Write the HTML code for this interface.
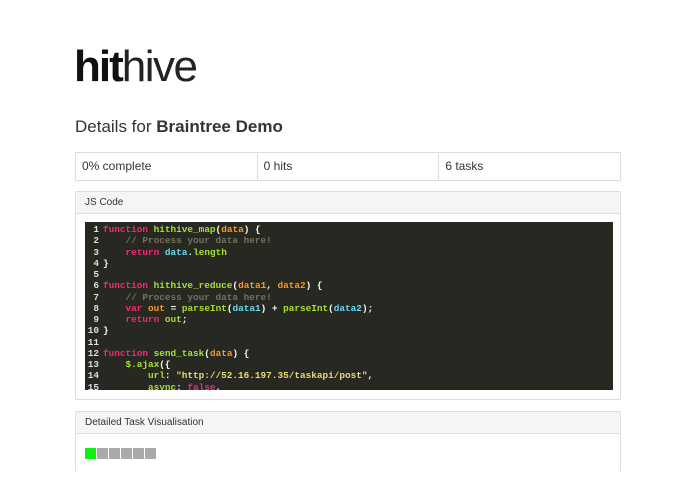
<!DOCTYPE html>
<html><head><style>
body{margin:0;background:#fff;font-family:"Liberation Sans",sans-serif;color:#333;width:695px;height:494px;overflow:hidden;position:relative}
.logo{position:absolute;left:74px;top:39px;font-size:44px;letter-spacing:-1.5px;color:#111;line-height:56px}
.logo b{font-weight:bold;letter-spacing:-2px}.logo span{font-weight:normal;color:#222}
h1{position:absolute;left:75px;top:117px;margin:0;font-size:17px;font-weight:normal;color:#333}
h1 b{font-weight:bold}
.stats{position:absolute;left:75px;top:152px;width:544px;height:27px;border:1px solid #ddd;display:flex;font-size:12px}
.stats div{flex:1;padding-left:6px;line-height:27px;border-left:1px solid #ddd}
.stats div:first-child{border-left:none}
.panel{position:absolute;left:75px;width:544px;border:1px solid #ddd;border-radius:2px}
.ph{background:#f5f5f5;border-bottom:1px solid #ddd;height:21px;line-height:21px;padding-left:9px;font-size:10px;color:#333}
.code{position:absolute;left:9px;top:30px;width:528px;height:168px;background:#272822;overflow:hidden;font-family:"Liberation Mono",monospace;font-weight:bold;font-size:9.4px;line-height:11.25px;padding-top:2px;box-sizing:border-box;white-space:pre;color:#f8f8f2}
.n{color:#ddd;display:inline-block;width:14px;text-align:right;margin-right:4px}
.k{color:#f92672}.f{color:#a6e22e}.p{color:#fd971f}.c{color:#75715e}.v{color:#66d9ef}.s{color:#e6db74}
.sq{position:absolute;top:36px;width:11px;height:11px;background:#aaa}
</style></head><body>
<div class="logo"><b>hit</b><span>hive</span></div>
<h1>Details for <b>Braintree Demo</b></h1>
<div class="stats"><div>0% complete</div><div>0 hits</div><div>6 tasks</div></div>
<div class="panel" style="top:191px;height:207px">
<div class="ph">JS Code</div>
<div class="code"><span class="n">1</span><span class="k">function</span> <span class="f">hithive_map</span>(<span class="p">data</span>) {
<span class="n">2</span>    <span class="c">// Process your data here!</span>
<span class="n">3</span>    <span class="k">return</span> <span class="v">data</span>.<span class="f">length</span>
<span class="n">4</span>}
<span class="n">5</span>
<span class="n">6</span><span class="k">function</span> <span class="f">hithive_reduce</span>(<span class="p">data1</span>, <span class="p">data2</span>) {
<span class="n">7</span>    <span class="c">// Process your data here!</span>
<span class="n">8</span>    <span class="k">var</span> <span class="p">out</span> = <span class="f">parseInt</span>(<span class="v">data1</span>) + <span class="f">parseInt</span>(<span class="v">data2</span>);
<span class="n">9</span>    <span class="k">return</span> <span class="f">out</span>;
<span class="n">10</span>}
<span class="n">11</span>
<span class="n">12</span><span class="k">function</span> <span class="f">send_task</span>(<span class="p">data</span>) {
<span class="n">13</span>    <span class="f">$.ajax</span>({
<span class="n">14</span>        <span class="f">url</span>: <span class="s">"http://52.16.197.35/taskapi/post"</span>,
<span class="n">15</span>        <span class="f">async</span>: <span class="k">false</span>,
</div>
</div>
<div class="panel" style="top:411px;height:60px;border-bottom:none">
<div class="ph">Detailed Task Visualisation</div>
<div class="sq" style="left:9px;background:#11ee11"></div>
<div class="sq" style="left:21px"></div>
<div class="sq" style="left:33px"></div>
<div class="sq" style="left:45px"></div>
<div class="sq" style="left:57px"></div>
<div class="sq" style="left:69px"></div>
</div>
</body></html>
